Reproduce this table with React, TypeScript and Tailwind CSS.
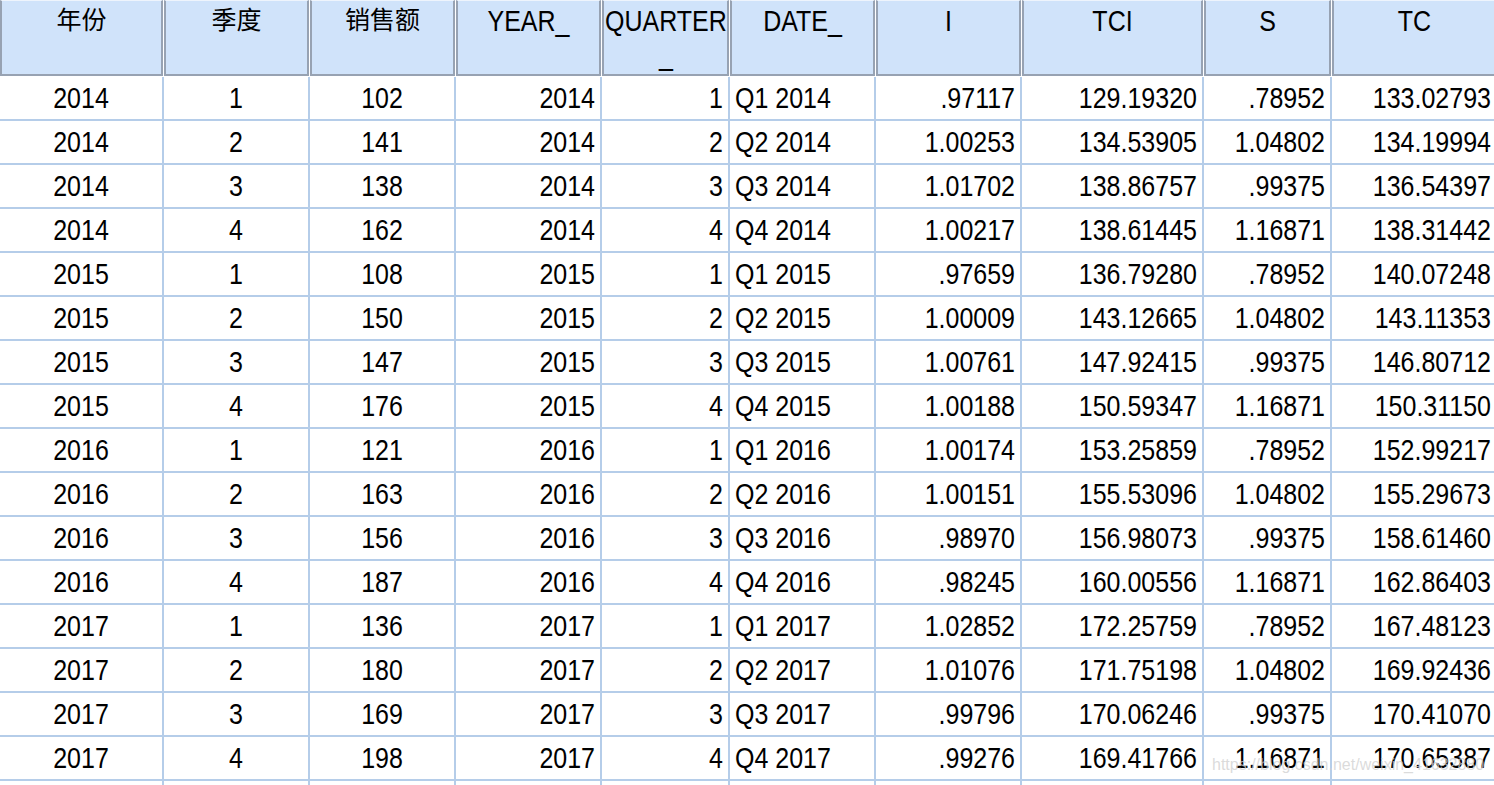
import React from "react";

type Col = { h: string; w: string; align: "center" | "right" | "left"; cjk?: boolean };

const cols: Col[] = [
  { h: "年份", w: "w-[164px]", align: "center", cjk: true },
  { h: "季度", w: "w-[146px]", align: "center", cjk: true },
  { h: "销售额", w: "w-[146px]", align: "center", cjk: true },
  { h: "YEAR_", w: "w-[146px]", align: "right" },
  { h: "QUARTER_", w: "w-[128px]", align: "right" },
  { h: "DATE_", w: "w-[146px]", align: "left" },
  { h: "I", w: "w-[146px]", align: "right" },
  { h: "TCI", w: "w-[182px]", align: "right" },
  { h: "S", w: "w-[128px]", align: "right" },
  { h: "TC", w: "w-[166px]", align: "right" },
];

const raw = `2014 1 102 2014 1 Q1_2014 .97117 129.19320 .78952 133.02793
2014 2 141 2014 2 Q2_2014 1.00253 134.53905 1.04802 134.19994
2014 3 138 2014 3 Q3_2014 1.01702 138.86757 .99375 136.54397
2014 4 162 2014 4 Q4_2014 1.00217 138.61445 1.16871 138.31442
2015 1 108 2015 1 Q1_2015 .97659 136.79280 .78952 140.07248
2015 2 150 2015 2 Q2_2015 1.00009 143.12665 1.04802 143.11353
2015 3 147 2015 3 Q3_2015 1.00761 147.92415 .99375 146.80712
2015 4 176 2015 4 Q4_2015 1.00188 150.59347 1.16871 150.31150
2016 1 121 2016 1 Q1_2016 1.00174 153.25859 .78952 152.99217
2016 2 163 2016 2 Q2_2016 1.00151 155.53096 1.04802 155.29673
2016 3 156 2016 3 Q3_2016 .98970 156.98073 .99375 158.61460
2016 4 187 2016 4 Q4_2016 .98245 160.00556 1.16871 162.86403
2017 1 136 2017 1 Q1_2017 1.02852 172.25759 .78952 167.48123
2017 2 180 2017 2 Q2_2017 1.01076 171.75198 1.04802 169.92436
2017 3 169 2017 3 Q3_2017 .99796 170.06246 .99375 170.41070
2017 4 198 2017 4 Q4_2017 .99276 169.41766 1.16871 170.65387`;

const rows: string[][] = raw
  .split("\n")
  .map((l) => l.trim().split(" ").map((v) => v.replace("_", " ")));

const font = { fontFamily: '"Liberation Sans", "Noto Sans CJK SC", sans-serif' };

function alignClass(a: Col["align"]) {
  if (a === "center") return "justify-center";
  if (a === "right") return "justify-end pr-[5px]";
  return "justify-start pl-[5px]";
}

export default function App() {
  return (
    <div
      className="relative w-[1494px] h-[785px] overflow-hidden bg-white text-black"
      style={font}
    >
      {/* header */}
      <div className="flex h-[77px]">
        {cols.map((c, i) => (
          <div key={i} className={`${c.w} shrink-0 h-[77px] pr-px pb-px bg-white`}>
            <div className="h-[76px] overflow-hidden border-l-2 border-r-2 border-b-2 border-[#97a2b2] border-t border-t-[#eef4fc] bg-[#d0e3fa] text-[25px] leading-[38px] text-center">
              {c.h === "QUARTER_" ? (
                <div className="text-left pl-[1px] whitespace-nowrap">
                  <div className="leading-[38px]">
                    <span className="inline-block scale-y-[1.17]">QUARTER</span>
                  </div>
                  <div className="leading-[30px] text-center">
                    <span className="inline-block scale-y-[1.17]">_</span>
                  </div>
                </div>
              ) : c.cjk ? (
                <span className="inline-block">{c.h}</span>
              ) : (
                <span className="inline-block scale-y-[1.17]">{c.h}</span>
              )}
            </div>
          </div>
        ))}
      </div>

      {/* data rows */}
      {[...rows, Array(10).fill("")].map((r, ri) => (
        <div key={ri} className="flex h-[44px]">
          {cols.map((c, ci) => (
            <div
              key={ci}
              className={`${c.w} shrink-0 h-[44px] flex items-center border-r-2 border-b-2 border-[#b5cde9] text-[25px] leading-none whitespace-nowrap ${alignClass(
                c.align
              )}`}
            >
              <span className="inline-block scale-y-[1.17]">{r[ci]}</span>
            </div>
          ))}
        </div>
      ))}

      {/* watermark */}
      <div className="absolute left-[1212px] top-[757px] text-[16px] leading-none text-[#cfcfcfc0] whitespace-nowrap pointer-events-none">
        https://blog.csdn.net/weixin_41632880
      </div>
    </div>
  );
}
